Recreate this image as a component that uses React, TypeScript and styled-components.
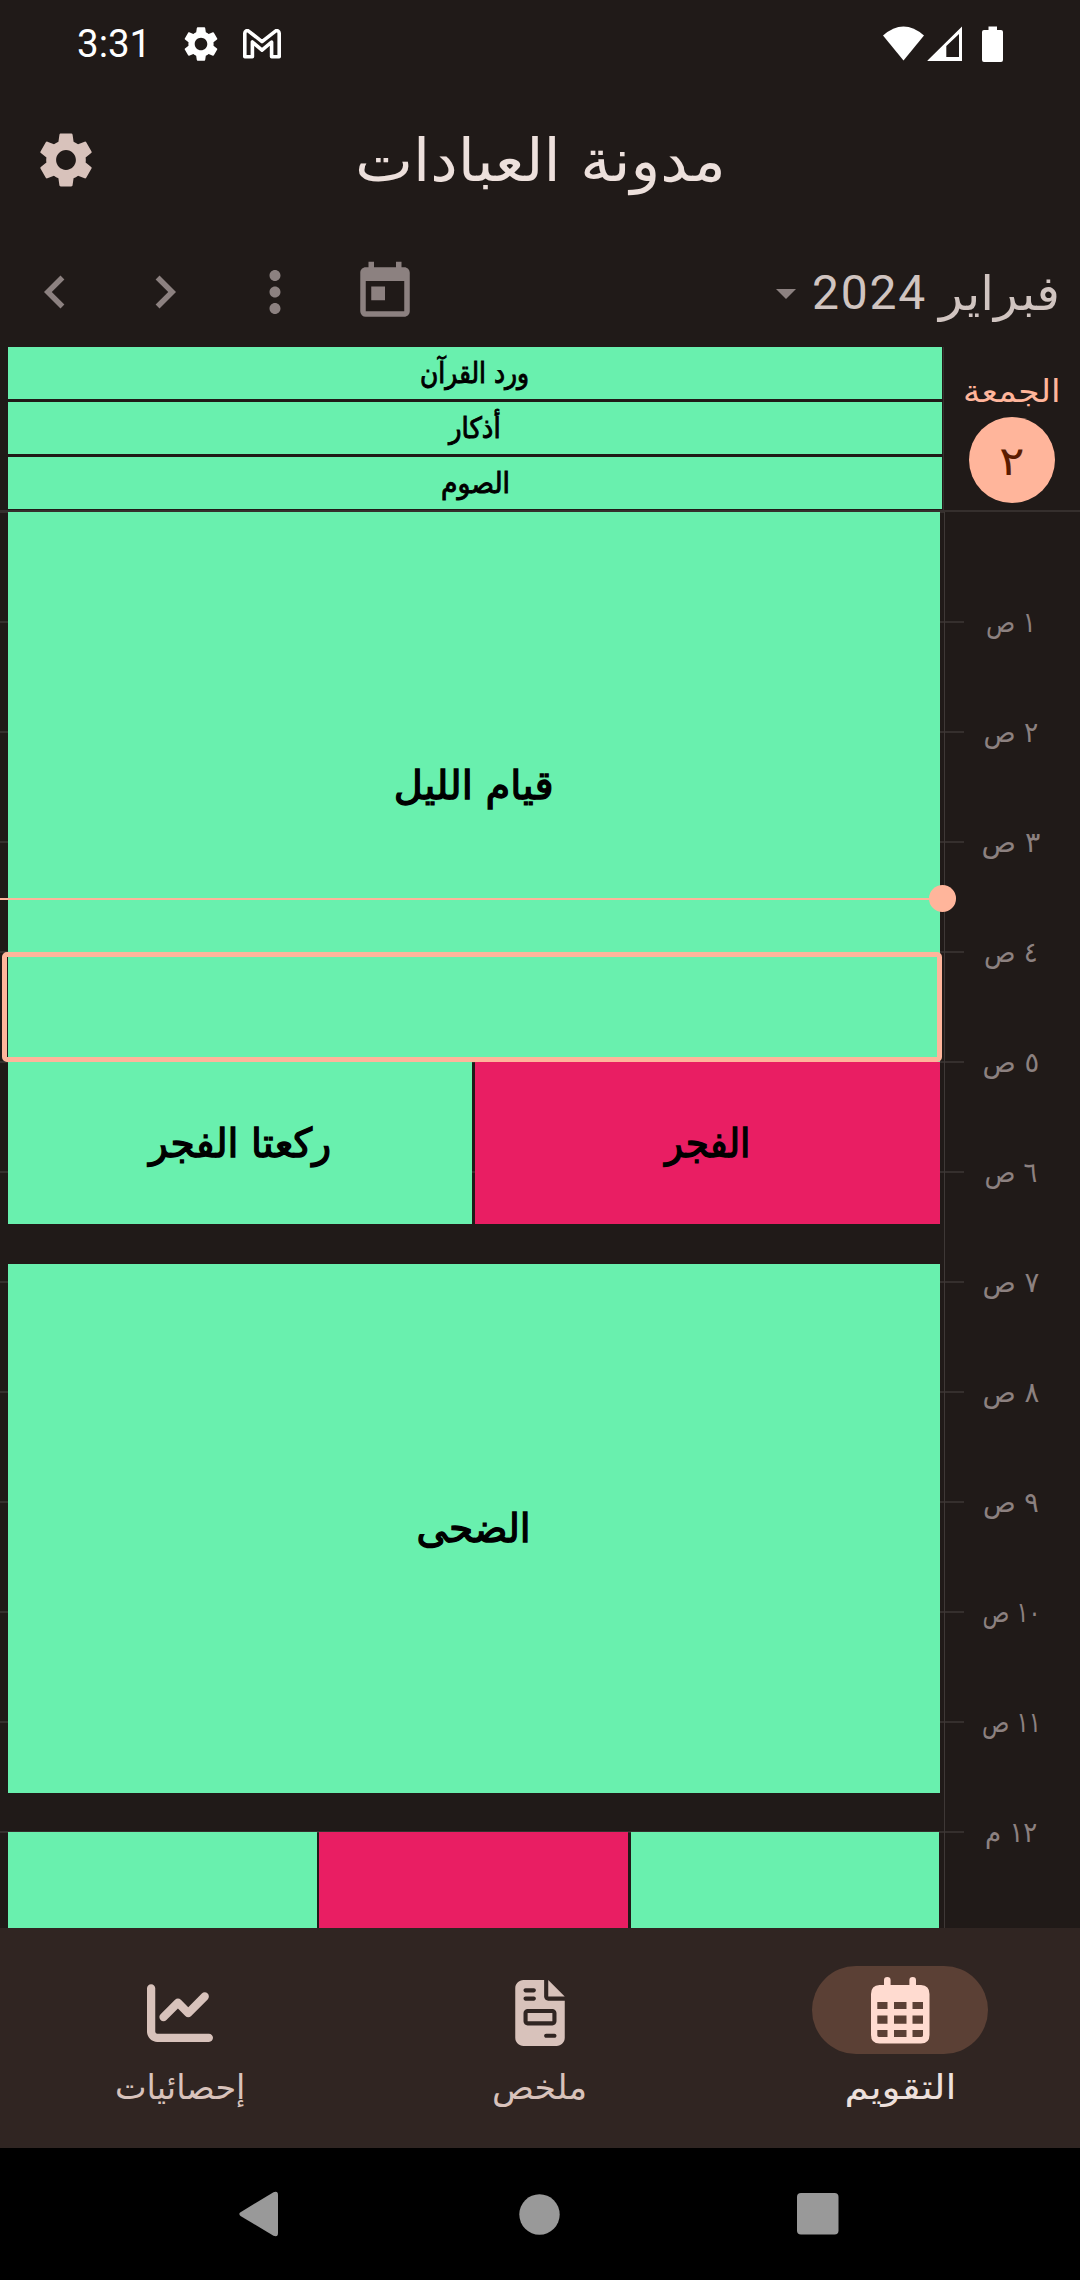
import React, { useLayoutEffect, useRef, useState } from "react";
import styled, { createGlobalStyle } from "styled-components";
import { FaChartLine, FaFileInvoice } from "react-icons/fa6";
import { MdSettings, MdChevronLeft, MdChevronRight, MdMoreVert, MdToday } from "react-icons/md";

const c = {
  bg: "#201a18",
  line: "#352f2d",
  title: "#ede0dc",
  month: "#d0c4c0",
  muted: "#8c8180",
  variant: "#d8c2bb",
  green: "#69f0ae",
  pink: "#e91e63",
  accent: "#ffb59b",
  onAccent: "#5b1b00",
  nav: "#302522",
  pill: "#5b4035",
  onPill: "#ffdbd0",
};

const GlobalStyle = createGlobalStyle`
  * { box-sizing: border-box; }
  body { margin: 0; background: #000; }
`;

const Screen = styled.div`
  width: 1080px;
  height: 2280px;
  display: flex;
  flex-direction: column;
  overflow: hidden;
  background: ${c.bg};
  font-family: "DejaVu Sans", sans-serif;
  svg { display: block; flex: none; }
`;

const Word = styled.span<{ $size: number; $color: string; $medium?: boolean; $shift: number }>`
  display: inline-block;
  white-space: nowrap;
  direction: rtl;
  line-height: 1;
  font-size: ${(p) => p.$size}px;
  -webkit-text-stroke: ${(p) => (p.$medium ? p.$size / 30 : 0)}px ${(p) => p.$color};
  color: ${(p) => p.$color};
  margin-top: ${(p) => p.$shift}px;
`;

const Slot = styled.span<{ $width: number }>`
  display: flex;
  justify-content: center;
  width: ${(p) => p.$width}px;
`;

type ArabicProps = { text: string; width: number; size: number; color: string; medium?: boolean; shift?: number };

/* Condenses or widens a word so that it fills the width it is given. */
function Arabic({ text, width, size, color, medium, shift = 0 }: ArabicProps) {
  const ref = useRef<HTMLSpanElement>(null);
  const [scale, setScale] = useState(1);
  useLayoutEffect(() => {
    if (ref.current) setScale(width / ref.current.offsetWidth);
  }, [width, text]);
  return (
    <Slot $width={width}>
      <Word ref={ref} $size={size} $color={color} $medium={medium} $shift={shift} style={{ transform: `scaleX(${scale})` }}>
        {text}
      </Word>
    </Slot>
  );
}

const StatusBar = styled.div`
  height: 88px;
  flex: none;
  display: flex;
  align-items: center;
  justify-content: space-between;
  padding: 0 77px 0 77px;
`;
const StatusSide = styled.div`
  display: flex;
  align-items: center;
  padding-bottom: 1px;
`;
const Clock = styled.span`
  width: 103px;
  padding-top: 1px;
  font: 400 38.5px/44px Roboto, sans-serif;
  color: #fff;
`;
const MailIcon = styled.svg`
  margin-left: 21px;
`;

const AppBar = styled.header`
  height: 149px;
  flex: none;
  display: grid;
  grid-template-columns: 132px 1fr 132px;
  justify-items: center;
  padding-top: 39px;
  color: ${c.variant};
`;

const Toolbar = styled.div`
  height: 110px;
  flex: none;
  display: flex;
  align-items: center;
  justify-content: space-between;
  color: ${c.muted};
`;
const ToolButtons = styled.div`
  display: flex;
`;
const ToolButton = styled.button`
  width: 110px;
  height: 110px;
  padding: 0;
  border: 0;
  background: none;
  color: inherit;
  display: grid;
  place-items: center;
`;
const MonthPicker = styled.div`
  display: flex;
  align-items: center;
  padding-right: 20px;
`;
const Caret = styled.span`
  border: 10.5px solid transparent;
  border-top-color: ${c.muted};
  border-bottom-width: 0;
  margin-right: 16px;
  margin-top: 3px;
`;
const Year = styled.span`
  width: 127px;
  padding-top: 2px;
  font: 400 48px/56px Roboto, sans-serif;
  letter-spacing: 1.8px;
  color: ${c.month};
`;

const AllDay = styled.section`
  height: 165px;
  flex: none;
  display: grid;
  grid-template-columns: 943px 137px;
  border-bottom: 2.5px solid ${c.line};
`;
const AllDayList = styled.div`
  display: flex;
  flex-direction: column;
  gap: 2.75px;
  padding-left: 8px;
  padding-right: 1px;
`;
const AllDayEvent = styled.div`
  height: 52.25px;
  flex: none;
  display: flex;
  justify-content: center;
  align-items: center;
  background: ${c.green};
`;
const DayHeader = styled.div`
  border-left: 1px solid ${c.line};
  display: flex;
  flex-direction: column;
  align-items: center;
  padding-top: 22px;
`;
const DayBadge = styled.div`
  width: 86px;
  height: 86px;
  border-radius: 50%;
  margin-top: 10px;
  background: ${c.accent};
  display: grid;
  place-items: center;
`;

const DayBody = styled.section`
  position: relative;
  height: 1416px;
  flex: none;
  display: grid;
  grid-template-columns: 944px 136px;
  overflow: hidden;
`;
const Timeline = styled.div`
  height: 1416px;
  padding: 0 4.5px 0 8px;
  background: repeating-linear-gradient(
    to bottom,
    ${c.line} 0 1px,
    transparent 1px 109px,
    ${c.line} 109px 110px
  );
`;
const EventRow = styled.div<{ $height: number; $after?: number }>`
  height: ${(p) => p.$height}px;
  margin-bottom: ${(p) => p.$after ?? 0}px;
  display: flex;
  gap: 2.6px;
`;
const Event = styled.div<{ $missed?: boolean }>`
  flex: 1 1 0;
  min-width: 0;
  display: flex;
  align-items: center;
  justify-content: center;
  background: ${(p) => (p.$missed ? c.pink : c.green)};
`;
const Hours = styled.div`
  border-left: 1px solid #3e3836;
  padding-top: 55px;
`;
const Hour = styled.div`
  height: 110px;
  display: flex;
  align-items: center;
`;
const Tick = styled.i`
  width: 19px;
  height: 2px;
  background: ${c.line};
`;
const HourLabel = styled.div`
  flex: 1;
  display: flex;
  justify-content: center;
  padding-right: 22px;
`;
const NowLine = styled.div`
  position: absolute;
  left: 0;
  top: 385.6px;
  width: 943px;
  height: 2.75px;
  background: ${c.accent};
  &::after {
    content: "";
    position: absolute;
    right: -13px;
    top: -12.4px;
    width: 27.5px;
    height: 27px;
    border-radius: 50%;
    background: ${c.accent};
  }
`;
const Selection = styled.div`
  position: absolute;
  left: 2px;
  top: 440px;
  width: 940px;
  height: 110px;
  border: 5px solid ${c.accent};
  border-radius: 5px;
`;

const BottomNav = styled.nav`
  height: 220px;
  flex: none;
  display: grid;
  grid-template-columns: repeat(3, 1fr);
  background: ${c.nav};
`;
const NavItem = styled.div`
  display: flex;
  flex-direction: column;
  align-items: center;
  padding-top: 38px;
`;
const NavIcon = styled.div<{ $active?: boolean }>`
  width: 176px;
  height: 88px;
  margin-bottom: 14px;
  padding-top: ${(p) => (p.$active ? 1 : 6)}px;
  border-radius: 44px;
  display: grid;
  place-items: center;
  background: ${(p) => (p.$active ? c.pill : "transparent")};
  color: ${(p) => (p.$active ? c.onPill : c.variant)};
`;

const SystemNav = styled.div`
  height: 132px;
  flex: none;
  display: grid;
  grid-template-columns: 40px 41px 42px;
  column-gap: 240px 237px;
  column-gap: 238.5px;
  align-items: center;
  padding: 0 0 0 239px;
  background: #000;
`;
const HomeIcon = styled.svg`
  margin-left: 1.5px;
`;

function CalendarIcon() {
  return (
    <svg width="59" height="67" viewBox="0 0 59 67" fill="currentColor">
      <path
        fillRule="evenodd"
        d="M13 8V3.3A3.3 3.3 0 0 1 19.6 3.3V8H38.4V3.3A3.3 3.3 0 0 1 45 3.3V8H50Q58.5 8.5 58.5 17V58Q58.5 66.5 50 66.5H8.5Q0 66.5 0 58V17Q0 8.5 8.5 8ZM6.3 25V32H16.5V25ZM23 25V32H35.5V25ZM41.5 25V32H52V25ZM6.3 38.5V46.8H16.5V38.5ZM23 38.5V46.8H35.5V38.5ZM41.5 38.5V46.8H52V38.5ZM6.3 53V58.5Q6.5 60 8.3 60H16.5V53ZM23 53V60H35.5V53ZM41.5 53V60H50Q51.8 60 52 58.5V53Z"
      />
    </svg>
  );
}

const hours = [
  ["١ ص", 50], ["٢ ص", 55], ["٣ ص", 59], ["٤ ص", 54], ["٥ ص", 57], ["٦ ص", 53],
  ["٧ ص", 57], ["٨ ص", 57], ["٩ ص", 56], ["١٠ ص", 58], ["١١ ص", 59], ["١٢ م", 52],
] as const;

const tabs = [
  { label: "إحصائيات", width: 130, icon: <FaChartLine size={66} /> },
  { label: "ملخص", width: 95, icon: <FaFileInvoice size={66} /> },
  { label: "التقويم", width: 112, icon: <CalendarIcon />, active: true },
];

export default function App() {
  return (
    <Screen>
      <GlobalStyle />
      <StatusBar>
        <StatusSide>
          <Clock>3:31</Clock>
          <MdSettings size={42} color="#fff" />
          <MailIcon width="38" height="30" viewBox="0 0 38 30" fill="none" stroke="#fff" strokeWidth="3.6" strokeLinejoin="round">
            <path d="M1.8 27.8V4.2Q2.2 1.2 5.2 1.8L19 12.6 32.8 1.8Q35.8 1.2 36.2 4.2V27.8H28.6V13L19 21.2 9.4 13V27.8Z" />
          </MailIcon>
        </StatusSide>
        <StatusSide>
          <svg width="120" height="36" viewBox="0 0 120 36" fill="#fff">
            <path d="M0 9.6Q20.5 -8.4 41 9.6L20.5 34.6Z" />
            <path fillRule="evenodd" d="M44.5 35V34.6L79 .4V35ZM63.3 20V31H76V8Z" />
            <path d="M105.5 .5H114V4H118Q120 4 120 6V34Q120 36 118 36H101Q99 36 99 34V6Q99 4 101 4H105.5Z" />
          </svg>
        </StatusSide>
      </StatusBar>

      <AppBar>
        <MdSettings size={66} />
        <Arabic text="مدونة العبادات" width={371} size={59} color={c.title} shift={4} />
      </AppBar>

      <Toolbar>
        <ToolButtons>
          <ToolButton><MdChevronLeft size={66} /></ToolButton>
          <ToolButton><MdChevronRight size={66} /></ToolButton>
          <ToolButton><MdMoreVert size={66} /></ToolButton>
          <ToolButton><MdToday size={66} /></ToolButton>
        </ToolButtons>
        <MonthPicker>
          <Caret />
          <Year>2024</Year>
          <Arabic text="فبراير" width={121} size={48} color={c.month} shift={1} />
        </MonthPicker>
      </Toolbar>

      <AllDay>
        <AllDayList>
          <AllDayEvent><Arabic text="ورد القرآن" width={109} size={29} color="#000" medium /></AllDayEvent>
          <AllDayEvent><Arabic text="أذكار" width={52} size={29} color="#000" medium /></AllDayEvent>
          <AllDayEvent><Arabic text="الصوم" width={69} size={29} color="#000" medium /></AllDayEvent>
        </AllDayList>
        <DayHeader>
          <Arabic text="الجمعة" width={98} size={31} color={c.accent} shift={7} />
          <DayBadge><Arabic text="٢" width={25} size={40} color={c.onAccent} shift={2} /></DayBadge>
        </DayHeader>
      </AllDay>

      <DayBody>
        <Timeline>
          <EventRow $height={550}>
            <Event><Arabic text="قيام الليل" width={160} size={40} color="#000" medium shift={-4} /></Event>
          </EventRow>
          <EventRow $height={162.3} $after={39.7}>
            <Event><Arabic text="ركعتا الفجر" width={182} size={40} color="#000" medium /></Event>
            <Event $missed><Arabic text="الفجر" width={85} size={40} color="#000" medium /></Event>
          </EventRow>
          <EventRow $height={529} $after={39.5}>
            <Event><Arabic text="الضحى" width={114} size={40} color="#000" medium /></Event>
          </EventRow>
          <EventRow $height={160}>
            <Event />
            <Event $missed />
            <Event />
          </EventRow>
        </Timeline>
        <Hours>
          {hours.map(([text, width]) => (
            <Hour key={text}>
              <Tick />
              <HourLabel><Arabic text={text} width={width} size={28} color={c.muted} shift={2} /></HourLabel>
            </Hour>
          ))}
        </Hours>
        <NowLine />
        <Selection />
      </DayBody>

      <BottomNav>
        {tabs.map(({ label, width, icon, active }) => (
          <NavItem key={label}>
            <NavIcon $active={active}>{icon}</NavIcon>
            <Arabic text={label} width={width} size={34} color={active ? c.title : c.variant} shift={2} />
          </NavItem>
        ))}
      </BottomNav>

      <SystemNav>
        <svg width="40" height="46" viewBox="0 0 40 46" fill="#999">
          <path d="M1.5 21.3 34.5 1.2Q39 -.5 39 4V42Q39 46.5 34.5 44.8L1.5 24.9Q-.8 23 1.5 21.3Z" />
        </svg>
        <HomeIcon width="41" height="41" viewBox="0 0 41 41" fill="#999"><circle cx="20.5" cy="20.5" r="20.2" /></HomeIcon>
        <svg width="42" height="42" viewBox="0 0 42 42" fill="#999"><rect width="41.5" height="41.5" rx="4" /></svg>
      </SystemNav>
    </Screen>
  );
}
